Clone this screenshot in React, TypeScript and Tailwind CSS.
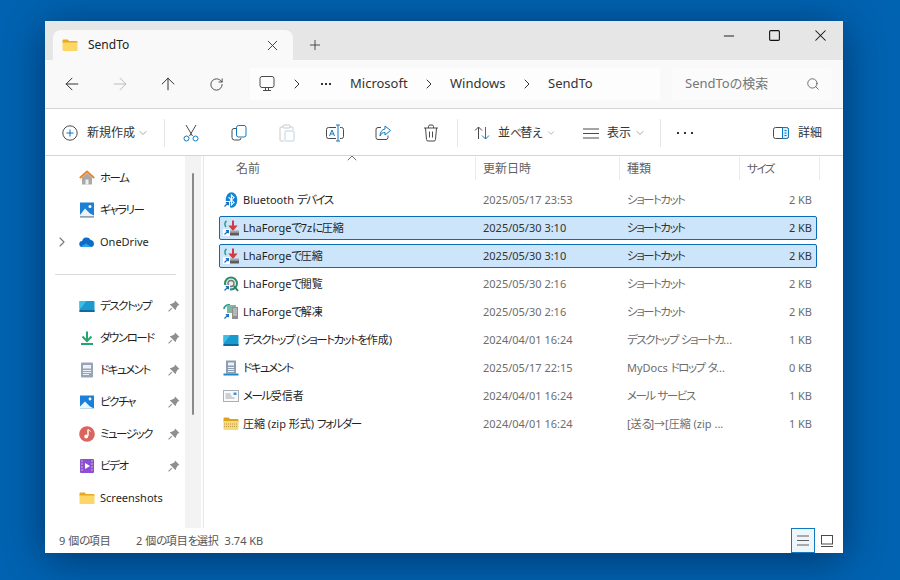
import type { ReactNode } from "react"
import { ArrowLeft, ArrowRight, ArrowUp, ChevronDown, ChevronRight, ChevronUp, Minus, Plus, RotateCw, Search, Square, X } from "lucide-react"

function FolderIcon() {
  return (
    <svg width="16" height="16" viewBox="0 0 16 16">
      <path d="M0.500 3.500a1 1 0 0 1 1-1h4l1.600 1.500h7.400a1 1 0 0 1 1 1V6H0.500z" fill="#e6a91f" />
      <path d="M0.500 5.500h15v7.500a1 1 0 0 1-1 1h-13a1 1 0 0 1-1-1z" fill="#fcd765" />
    </svg>
  )
}

function Shortcut() {
  return (
    <span className="absolute bottom-0 left-0 flex h-[7px] w-[7px] items-center justify-center bg-white">
      <svg width="7" height="7" viewBox="0 0 7 7">
        <path d="M1.500 5.500 5 2M2.800 1.600H5.400V4.200" fill="none" stroke="#1f6fc0" strokeWidth="1.200" />
      </svg>
    </span>
  )
}

function HomeIcon() {
  return (
    <svg width="16" height="16" viewBox="0 0 16 16">
      <path d="M3 7.500 8 3l5 4.500V14.500H3z" fill="#a9a9a9" />
      <rect x="6.500" y="9.500" width="3" height="5" fill="#efefef" />
      <path d="M0.800 8 8 1.500 15.200 8" fill="none" stroke="#e8862e" strokeWidth="2" />
    </svg>
  )
}

function GalleryIcon() {
  return (
    <svg width="16" height="16" viewBox="0 0 16 16">
      <rect x="1" y="0.500" width="14" height="15" fill="#1c7fd6" />
      <circle cx="11" cy="4.500" r="1.500" fill="#fff" />
      <path d="M1 13 6 6.500l5 5 4 2V15.500H1z" fill="#eaf3fb" />
      <rect x="1" y="14" width="14" height="1.500" fill="#8fa3b5" />
    </svg>
  )
}

function CloudIcon() {
  return (
    <svg width="16" height="16" viewBox="0 0 16 16">
      <path d="M3.500 13a3 3 0 0 1-.4-6A4.600 4.600 0 0 1 11.600 6 3.600 3.600 0 0 1 12.500 13z" fill="#0f6cc4" />
      <path d="M3.500 13a3 3 0 0 1-1.600-.5L7 9.500l5.500 3.500z" fill="#2aa3ea" />
    </svg>
  )
}

function DesktopIcon() {
  return (
    <svg width="16" height="13" viewBox="0 0 16 13">
      <rect x="0.500" y="1" width="15" height="11" rx="0.800" fill="#1a9bd0" />
      <rect x="0.500" y="10" width="15" height="2" fill="#126a9c" />
      <path d="M0.500 1h7L2 8H.5z" fill="#3cbde6" />
    </svg>
  )
}

function DownloadIcon() {
  return (
    <svg width="16" height="16" viewBox="0 0 16 16">
      <path d="M8 1.500V10.500M3.500 6.500 8 11l4.500-4.500" fill="none" stroke="#23a66f" strokeWidth="2" />
      <rect x="2" y="13" width="12" height="2" fill="#23a66f" />
    </svg>
  )
}

function DocIcon() {
  return (
    <svg width="16" height="16" viewBox="0 0 16 16">
      <rect x="2" y="0.500" width="12" height="15" rx="1" fill="#97a5ba" />
      <rect x="4" y="3" width="8" height="3.500" fill="#eef1f5" />
      <path d="M4 8.500h8M4 10.500h8M4 12.500h6" stroke="#eef1f5" />
    </svg>
  )
}

function PictureIcon() {
  return (
    <svg width="16" height="16" viewBox="0 0 16 16">
      <rect x="1" y="1.500" width="14" height="13" fill="#1a80d9" />
      <circle cx="11" cy="5" r="1.400" fill="#fff" />
      <path d="M1 12.500 6 7.500l5 5 4 2H1z" fill="#eef5fb" />
    </svg>
  )
}

function MusicIcon() {
  return (
    <svg width="16" height="16" viewBox="0 0 16 16">
      <circle cx="8" cy="8" r="7.800" fill="#d9665e" />
      <path d="M9 3.500v6.500" stroke="#fff" strokeWidth="1.400" />
      <path d="M9 3.500c1 .8 2 1 2.600 2" stroke="#fff" fill="none" />
      <circle cx="7.200" cy="10.500" r="1.900" fill="#fff" />
    </svg>
  )
}

function VideoIcon() {
  return (
    <svg width="16" height="16" viewBox="0 0 16 16">
      <rect x="1" y="1" width="14" height="14" rx="1" fill="#8a4fd8" />
      <path d="M6 5v6l5-3z" fill="#fff" />
      <path d="M2.500 3h1M2.500 6h1M2.500 9h1M2.500 12h1M12.500 3h1M12.500 6h1M12.500 9h1M12.500 12h1" stroke="#f4d66f" strokeWidth="1.400" />
    </svg>
  )
}

function BluetoothIcon() {
  return (
    <span className="relative block h-4 w-4">
      <svg width="16" height="16" viewBox="0 0 16 16">
        <ellipse cx="8.500" cy="8" rx="5.800" ry="7.800" fill="#1284d8" />
        <path d="M5.500 5.200 11 10.400 8.400 13V3l2.600 2.600-5.500 5.200" fill="none" stroke="#fff" strokeWidth="1.100" />
      </svg>
      <Shortcut />
    </span>
  )
}

function LhaCompress() {
  return (
    <span className="relative block h-4 w-4">
      <svg width="16" height="16" viewBox="0 0 16 16">
        <path d="M3.500 1C1.500 2.500 1.500 5 3 7" fill="none" stroke="#2e9c8c" strokeWidth="1.600" />
        <path d="M10 0.500v6M7.500 6.500l2.500 3 2.500-3z" fill="#d93a40" stroke="#d93a40" strokeWidth="2" />
        <rect x="6" y="10.500" width="10" height="2" fill="#a4a4a4" />
        <rect x="7" y="12.500" width="9" height="3" fill="#5d5d5d" />
      </svg>
      <Shortcut />
    </span>
  )
}

function LhaView() {
  return (
    <span className="relative block h-4 w-4">
      <svg width="16" height="16" viewBox="0 0 16 16">
        <circle cx="8" cy="7.500" r="6" fill="#e9ecec" stroke="#2d8c6d" strokeWidth="2" />
        <circle cx="8" cy="7.500" r="3" fill="none" stroke="#777" strokeWidth="1.400" />
        <path d="M11 10l4 5" stroke="#2d7d5c" strokeWidth="2" />
      </svg>
      <Shortcut />
    </span>
  )
}

function LhaExtract() {
  return (
    <span className="relative block h-4 w-4">
      <svg width="16" height="16" viewBox="0 0 16 16">
        <path d="M1 5C1 2 4 .5 7 1" fill="none" stroke="#2e9c8c" strokeWidth="1.800" />
        <rect x="4" y="1" width="9" height="8" fill="#7fb7a5" />
        <rect x="9" y="3" width="6" height="12" fill="#8f8f8f" />
        <path d="M10 5h4M10 7h4M10 9h4M10 11h4" stroke="#dcdcdc" />
      </svg>
      <Shortcut />
    </span>
  )
}

function MailIcon() {
  return (
    <svg width="16" height="12" viewBox="0 0 16 12">
      <rect x="0.500" y="0.500" width="15" height="11" fill="#fafafa" stroke="#a9b1b8" />
      <rect x="10.500" y="2.500" width="3" height="2.500" fill="#3f95d6" />
      <path d="M2.500 4h5M2.500 6h6M2.500 8h9" stroke="#9fa7ae" />
    </svg>
  )
}

function DocShortcutIcon() {
  return (
    <svg width="16" height="16" viewBox="0 0 16 16">
      <rect x="3" y="0.500" width="10" height="13" fill="#8d9db5" />
      <rect x="5" y="2.500" width="6" height="3" fill="#eef1f5" />
      <path d="M5 7.500h6M5 9.500h6M5 11.500h6" stroke="#eef1f5" />
      <rect x="0.500" y="13.500" width="15" height="2" fill="#1f86c9" />
    </svg>
  )
}

function ZipIcon() {
  return (
    <svg width="16" height="16" viewBox="0 0 16 16">
      <path d="M0.500 2.500a1 1 0 0 1 1-1h4l1.600 1.500h7.400a1 1 0 0 1 1 1V6H0.500z" fill="#dba31e" />
      <path d="M0.500 5h15v8a1 1 0 0 1-1 1h-13a1 1 0 0 1-1-1z" fill="#f9d976" />
      <path d="M1 8h14M1 10.500h14" stroke="#b89a4a" strokeDasharray="1 1" />
    </svg>
  )
}

function NewIcon() {
  return (
    <svg width="16" height="16" viewBox="0 0 16 16">
      <circle cx="8" cy="8" r="7.200" fill="none" stroke="#4a4a4a" />
      <path d="M8 4.500v7M4.500 8h7" stroke="#0f6cbd" />
    </svg>
  )
}

function CutIcon() {
  return (
    <svg width="16" height="18" viewBox="0 0 16 18">
      <path d="M3 1l6.500 11M13 1 6.500 12" stroke="#4a4a4a" fill="none" />
      <circle cx="3.500" cy="14.500" r="2.500" fill="none" stroke="#0f7ac0" />
      <circle cx="12.500" cy="14.500" r="2.500" fill="none" stroke="#0f7ac0" />
    </svg>
  )
}

function CopyIcon() {
  return (
    <svg width="16" height="16" viewBox="0 0 16 16">
      <rect x="5.500" y="0.500" width="9.500" height="11.500" rx="2" fill="none" stroke="#0f7ac0" />
      <path d="M5 3.500H3a2 2 0 0 0-2 2v7a2.500 2.500 0 0 0 2.500 2.500H8a2 2 0 0 0 2-2" fill="none" stroke="#4a4a4a" />
    </svg>
  )
}

function PasteIcon() {
  return (
    <svg width="16" height="18" viewBox="0 0 16 18">
      <path d="M4 3H2a1 1 0 0 0-1 1v12a1 1 0 0 0 1 1h3" fill="none" stroke="#c9c9c9" />
      <rect x="4" y="1" width="7" height="3" rx="1" fill="none" stroke="#c9c9c9" />
      <path d="M11 3h2a1 1 0 0 1 1 1v2" fill="none" stroke="#c9c9c9" />
      <rect x="6" y="7" width="9" height="10" rx="1" fill="none" stroke="#b9d4e8" />
    </svg>
  )
}

function RenameIcon() {
  return (
    <svg width="18" height="18" viewBox="0 0 18 18">
      <path d="M10 3.500H2.500a2 2 0 0 0-2 2v7a2 2 0 0 0 2 2H10M14 3.500h1.500a2 2 0 0 1 2 2v7a2 2 0 0 1-2 2H14" fill="none" stroke="#4a4a4a" />
      <path d="M3.500 12 6 6l2.500 6M4.500 10h3" fill="none" stroke="#0f7ac0" />
      <path d="M12 1v16M10 1h4M10 17h4" fill="none" stroke="#0f7ac0" />
    </svg>
  )
}

function ShareIcon() {
  return (
    <svg width="16" height="16" viewBox="0 0 16 16">
      <path d="M6 2.500H3a2 2 0 0 0-2 2v8a2 2 0 0 0 2 2h8a2 2 0 0 0 2-2v-2" fill="none" stroke="#4a4a4a" />
      <path d="M10 1l5.500 4.500L10 10V7.500C7.500 7.500 6 8.500 5 11c0-4 2-6.500 5-7z" fill="none" stroke="#0f7ac0" />
    </svg>
  )
}

function TrashIcon() {
  return (
    <svg width="16" height="18" viewBox="0 0 16 18">
      <path d="M1 4h14M5.500 4V2.500a1.500 1.500 0 0 1 1.500-1.500h2a1.500 1.500 0 0 1 1.500 1.500V4M2.500 4l1 11.500a1.500 1.500 0 0 0 1.500 1.500h6a1.500 1.500 0 0 0 1.500-1.500l1-11.500M6.500 7.500v6M9.500 7.500v6" fill="none" stroke="#4a4a4a" />
    </svg>
  )
}

function SortIcon() {
  return (
    <svg width="16" height="14" viewBox="0 0 16 14">
      <path d="M4.500 13V1M1 4.500 4.500 1 8 4.500" fill="none" stroke="#4a4a4a" />
      <path d="M11.500 1v12M8 9.500l3.500 3.500 3.500-3.500" fill="none" stroke="#0f7ac0" />
    </svg>
  )
}

function ViewLines({ w = 16 }: { w?: number }) {
  return (
    <svg width={w} height="11" viewBox="0 0 16 11" preserveAspectRatio="none">
      <path d="M0 1h16M0 5.500h16M0 10h16" stroke="#4a4a4a" />
    </svg>
  )
}

function DetailsIcon() {
  return (
    <svg width="16" height="12" viewBox="0 0 16 12">
      <rect x="0.500" y="0.500" width="15" height="11" rx="2" fill="none" stroke="#4a4a4a" />
      <path d="M9.500 0.500h4a2 2 0 0 1 2 2v7a2 2 0 0 1-2 2h-4z" fill="#d6ecfb" stroke="#0f7ac0" />
      <path d="M11.500 3.500h2M11.500 6h2M11.500 8.500h2" stroke="#0f7ac0" />
    </svg>
  )
}

function MonitorIcon() {
  return (
    <svg width="16" height="16" viewBox="0 0 16 16">
      <rect x="1" y="0.500" width="14" height="11" rx="2" fill="none" stroke="#4a4a4a" />
      <path d="M6.500 12v2M9.500 12v2M4 14.500h8" stroke="#4a4a4a" />
    </svg>
  )
}

function PinIcon() {
  return (
    <svg width="12" height="12" viewBox="0 0 11 11">
      <path d="M6.500 0.500 10.500 4.500 9 5 7.500 7.500 7 9.500 1.500 4 3.500 3.500 6 2z" fill="#8f8f8f" />
      <path d="M3.500 7.500 0.500 10.500" stroke="#8f8f8f" />
    </svg>
  )
}

function Dots({ gap }: { gap: number }) {
  return (
    <svg width={gap * 2 + 2} height="2" viewBox={"0 0 " + (gap * 2 + 2) + " 2"}>
      <rect width="2" height="2" fill="#333" />
      <rect x={gap} width="2" height="2" fill="#333" />
      <rect x={gap * 2} width="2" height="2" fill="#333" />
    </svg>
  )
}

// the reference's kana are much narrower than Noto's, so kana runs get squeezed
function Jp({ text }: { text: string }) {
  return (
    <>
      {text.split(/([\u3040-\u30ff]+)/).map((part, i) =>
        i % 2 === 1 ? (
          <span key={i} className="text-[11.5px] tracking-[-1.5px]">{part}</span>
        ) : (
          <span key={i}>{part}</span>
        )
      )}
    </>
  )
}

type NavItem = { label: string; icon: ReactNode; pinned?: boolean; expand?: boolean }

const navTop: NavItem[] = [
  { label: "ホーム", icon: <HomeIcon /> },
  { label: "ギャラリー", icon: <GalleryIcon /> },
  { label: "OneDrive", icon: <CloudIcon />, expand: true },
]

const navBottom: NavItem[] = [
  { label: "デスクトップ", icon: <DesktopIcon />, pinned: true },
  { label: "ダウンロード", icon: <DownloadIcon />, pinned: true },
  { label: "ドキュメント", icon: <DocIcon />, pinned: true },
  { label: "ピクチャ", icon: <PictureIcon />, pinned: true },
  { label: "ミュージック", icon: <MusicIcon />, pinned: true },
  { label: "ビデオ", icon: <VideoIcon />, pinned: true },
  { label: "Screenshots", icon: <FolderIcon /> },
]

const files = [
  { name: "Bluetooth デバイス", date: "2025/05/17 23:53", type: "ショートカット", size: "2 KB", icon: <BluetoothIcon /> },
  { name: "LhaForgeで7zに圧縮", date: "2025/05/30 3:10", type: "ショートカット", size: "2 KB", icon: <LhaCompress />, selected: true },
  { name: "LhaForgeで圧縮", date: "2025/05/30 3:10", type: "ショートカット", size: "2 KB", icon: <LhaCompress />, selected: true },
  { name: "LhaForgeで閲覧", date: "2025/05/30 2:16", type: "ショートカット", size: "2 KB", icon: <LhaView /> },
  { name: "LhaForgeで解凍", date: "2025/05/30 2:16", type: "ショートカット", size: "2 KB", icon: <LhaExtract /> },
  { name: "デスクトップ (ショートカットを作成)", date: "2024/04/01 16:24", type: "デスクトップ ショートカ...", size: "1 KB", icon: <DesktopIcon /> },
  { name: "ドキュメント", date: "2025/05/17 22:15", type: "MyDocs ドロップ タ...", size: "0 KB", icon: <DocShortcutIcon /> },
  { name: "メール受信者", date: "2024/04/01 16:24", type: "メール サービス", size: "1 KB", icon: <MailIcon /> },
  { name: "圧縮 (zip 形式) フォルダー", date: "2024/04/01 16:24", type: "[送る]→[圧縮 (zip ...", size: "1 KB", icon: <ZipIcon /> },
]

function NavRow({ item }: { item: NavItem }) {
  return (
    <div className="flex h-8 items-center pl-[10px] pr-[4px] text-[#1f1f1f]">
      <span className="flex w-6 items-center">
        {item.expand && <ChevronRight size={16} strokeWidth={1.6} className="-ml-[1px] text-[#777]" />}
      </span>
      <span className="flex w-[21px] items-center">{item.icon}</span>
      <span className="whitespace-nowrap text-[11px]"><Jp text={item.label} /></span>
      {item.pinned && (
        <span className="ml-auto flex w-[13px]">
          <PinIcon />
        </span>
      )}
    </div>
  )
}

function ToolButton({ children }: { children: ReactNode }) {
  return <span className="flex h-full w-12 items-center justify-center">{children}</span>
}

function Separator() {
  return <span className="block h-7 w-px bg-[#e6e6e6]" />
}

function Caret() {
  return <ChevronDown size={12} strokeWidth={1.5} className="text-[#8a8a8a]" />
}

export default function App() {
  return (
    <div className="flex h-[580px] w-[900px] items-start overflow-hidden bg-[#0063b1] pl-[45px] pt-[21px] font-['Noto_Sans','Noto_Sans_CJK_JP',sans-serif] [font-feature-settings:'palt']">
      <div className="flex h-[532px] w-[798px] flex-col bg-white shadow-[0_6px_40px_rgba(0,25,60,0.6)]">
        <div className="flex h-[39px] shrink-0 bg-[#e6e6e6] pl-2">
          <div className="mt-[9px] flex h-[30px] w-[240px] items-center rounded-t-lg bg-[#f9f9f9] pl-[9px]">
            <FolderIcon />
            <span className="ml-[10px] text-[12px] text-[#222]">SendTo</span>
            <X size={17} strokeWidth={1.3} className="ml-auto mr-[12px] text-[#333]" />
          </div>
          <div className="mt-[9px] flex h-[30px] w-11 items-center justify-center">
            <Plus size={16} strokeWidth={1.3} className="text-[#333]" />
          </div>
          <div className="ml-auto flex">
            <span className="flex h-[29px] w-[45px] items-center justify-center"><Minus size={16} strokeWidth={1.4} className="text-[#111]" /></span>
            <span className="flex h-[29px] w-[46px] items-center justify-center"><Square size={13} strokeWidth={2} className="text-[#111]" /></span>
            <span className="flex h-[29px] w-[46px] items-center justify-center"><X size={19} strokeWidth={1.3} className="text-[#111]" /></span>
          </div>
        </div>

        <div className="flex h-[49px] shrink-0 items-center border-b border-[#d5d5d5] bg-[#f9f9f9] pl-[3px] text-[#333]">
          <span className="flex w-12 justify-center"><ArrowLeft size={20} strokeWidth={1.2} className="text-[#333]" /></span>
          <span className="flex w-12 justify-center"><ArrowRight size={20} strokeWidth={1.2} className="text-[#bcbcbc]" /></span>
          <span className="flex w-12 justify-center"><ArrowUp size={20} strokeWidth={1.2} className="text-[#333]" /></span>
          <span className="flex w-12 justify-center"><RotateCw size={15} strokeWidth={1.5} className="text-[#444]" /></span>
          <div className="ml-[10px] flex h-8 w-[410px] items-center rounded bg-[#fdfdfd] text-[13px]">
            <span className="flex w-[34px] justify-center"><MonitorIcon /></span>
            <span className="flex w-[26px] justify-center"><ChevronRight size={16} strokeWidth={1.5} /></span>
            <span className="flex w-8 justify-center"><Dots gap={4} /></span>
            <span className="ml-2 w-[66px]">Microsoft</span>
            <span className="flex w-[26px] justify-center"><ChevronRight size={16} strokeWidth={1.5} /></span>
            <span className="ml-2 w-16">Windows</span>
            <span className="flex w-[26px] justify-center"><ChevronRight size={16} strokeWidth={1.5} /></span>
            <span className="ml-2">SendTo</span>
          </div>
          <div className="ml-3 flex h-8 w-40 items-center rounded bg-[#fbfbfb] pl-[13px] pr-[12px] text-[13px] text-[#777]">
            <span>SendToの検索</span>
            <Search size={14} strokeWidth={1.4} className="ml-auto text-[#555]" />
          </div>
        </div>

        <div className="flex h-[47px] shrink-0 items-center border-b border-[#d5d5d5] pl-2 pr-[21px] pt-[2px] text-[12px] text-[#333]">
          <span className="flex w-[34px] justify-center"><NewIcon /></span>
          <span className="w-12">新規作成</span>
          <span className="flex w-4 justify-center"><Caret /></span>
          <span className="ml-[13px]"><Separator /></span>
          <div className="ml-[2px] flex h-full">
            <ToolButton><CutIcon /></ToolButton>
            <ToolButton><CopyIcon /></ToolButton>
            <ToolButton><PasteIcon /></ToolButton>
            <ToolButton><RenameIcon /></ToolButton>
            <ToolButton><ShareIcon /></ToolButton>
            <ToolButton><TrashIcon /></ToolButton>
          </div>
          <span className="ml-[2px]"><Separator /></span>
          <span className="ml-3 flex w-6 justify-center"><SortIcon /></span>
          <span className="ml-1 w-12"><Jp text="並べ替え" /></span>
          <span className="flex w-[10px] justify-center"><Caret /></span>
          <span className="ml-[23px] flex w-6 justify-center"><ViewLines /></span>
          <span className="ml-1 w-6">表示</span>
          <span className="flex w-[18px] justify-center"><Caret /></span>
          <span className="ml-[11px]"><Separator /></span>
          <span className="ml-3 flex w-6 justify-center"><Dots gap={7} /></span>
          <span className="ml-auto flex w-6 justify-center"><DetailsIcon /></span>
          <span className="ml-[5px]">詳細</span>
        </div>

        <div className="flex min-h-0 flex-1">
          <div className="w-[140px] shrink-0 pt-[6px]">
            {navTop.map((item) => <NavRow key={item.label} item={item} />)}
            <div className="ml-[10px] mr-[9px] mt-4 mb-[15px] h-px bg-[#dcdcdc]" />
            {navBottom.map((item) => <NavRow key={item.label} item={item} />)}
          </div>
          <div className="w-4 shrink-0 bg-[#f3f3f3] pl-[7px] pt-[17px]">
            <div className="h-[242px] w-[2px] rounded-full bg-[#8a8a8a]" />
          </div>
          <div className="relative ml-[2px] flex-1 border-l border-[#e6e6e6] pl-[15px]">
            <ChevronUp size={16} strokeWidth={1.4} className="absolute -top-[6px] left-[140px] text-[#666]" />
            <div className="flex h-6 pt-[1px] text-[12px] text-[#5f5f5f]">
              <span className="flex w-[257px] items-center border-r border-[#eaeaea] pl-[17px]">名前</span>
              <span className="flex w-[144px] items-center border-r border-[#eaeaea] pl-[7px]">更新日時</span>
              <span className="flex w-[120px] items-center border-r border-[#eaeaea] pl-[7px]">種類</span>
              <span className="flex w-[80px] items-center border-r border-[#eaeaea] pl-[7px]"><span><Jp text="サイズ" /></span></span>
            </div>
            <div className="mt-2 flex w-[598px] flex-col gap-1">
              {files.map((f) => (
                <div
                  key={f.name}
                  className={
                    f.selected
                      ? "flex h-6 items-center rounded-[2px] border border-[#0a6cb5] bg-[#cce5fb] pl-[3px] pr-1 text-[11px]"
                      : "flex h-6 items-center border border-transparent pl-[3px] pr-1 text-[11px]"
                  }
                >
                  <span className="flex w-5 shrink-0 items-center">{f.icon}</span>
                  <span className="w-[240px] shrink-0 text-[#1f1f1f]"><Jp text={f.name} /></span>
                  <span className={f.selected ? "w-[144px] shrink-0 text-[#333]" : "w-[144px] shrink-0 text-[#6d6d6d]"}>{f.date}</span>
                  <span className={f.selected ? "w-[134px] shrink-0 text-[#333]" : "w-[134px] shrink-0 text-[#6d6d6d]"}><Jp text={f.type} /></span>
                  <span className={f.selected ? "flex-1 text-right text-[#333]" : "flex-1 text-right text-[#6d6d6d]"}>{f.size}</span>
                </div>
              ))}
            </div>
          </div>
        </div>

        <div className="flex h-[25px] shrink-0 items-center pl-[14px] text-[11px] text-[#555]">
          <span className="w-[77px]"><Jp text="9 個の項目" /></span>
          <span><Jp text="2 個の項目を選択" />&nbsp;&nbsp;3.74 KB</span>
          <div className="ml-auto flex h-full pr-1">
            <span className="flex h-full w-6 items-center justify-center border border-[#0f7ac0] bg-[#eef5fb]"><ViewLines w={12} /></span>
            <span className="flex h-full w-6 items-center justify-center">
              <svg width="12" height="12" viewBox="0 0 12 12">
                <rect x="0.500" y="0.500" width="11" height="8.500" fill="none" stroke="#4a4a4a" />
                <path d="M0 11.500h12" stroke="#4a4a4a" />
              </svg>
            </span>
          </div>
        </div>
      </div>
    </div>
  )
}
